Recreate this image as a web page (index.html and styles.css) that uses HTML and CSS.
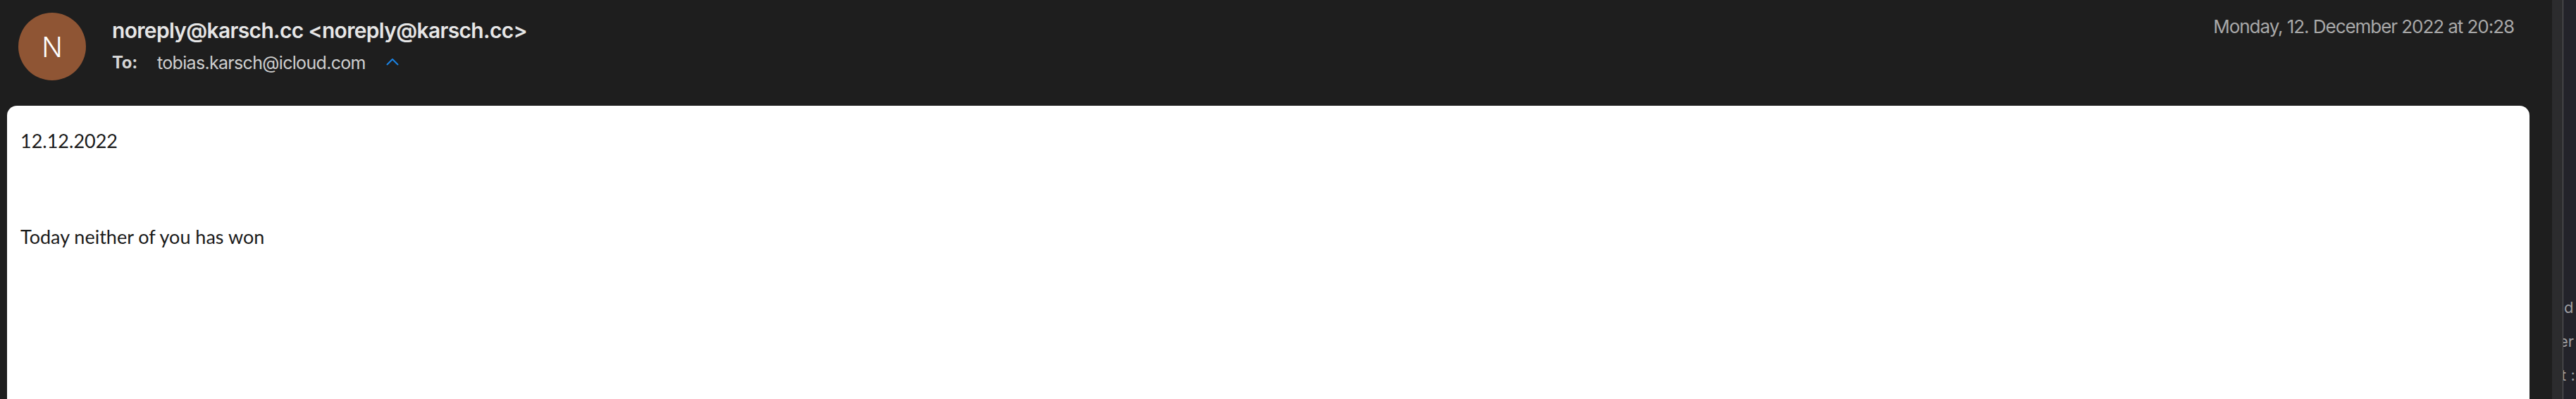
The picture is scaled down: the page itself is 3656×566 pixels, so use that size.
FILE: index.html
```html
<!DOCTYPE html>
<html lang="en">
<head>
<meta charset="utf-8">
<title>noreply@karsch.cc</title>
<link rel="stylesheet" href="styles.css">
</head>
<body>
<div class="window">
  <main class="pane">
    <header class="mail-header">
      <div class="avatar">N</div>
      <div class="meta">
        <div class="from">noreply@karsch.cc &lt;noreply@karsch.cc&gt;</div>
        <div class="to">
          <span class="to-label">To:</span>
          <span class="to-addr">tobias.karsch@icloud.com</span>
          <svg class="chevron" width="18" height="11" viewBox="0 0 18 11" aria-hidden="true">
            <path d="M1.5 9.5 L9 2 L16.5 9.5" fill="none" stroke="#1a84e6" stroke-width="2" stroke-linecap="round" stroke-linejoin="round"/>
          </svg>
        </div>
      </div>
      <div class="date">Monday, 12. December 2022 at 20:28</div>
    </header>
    <article class="card">
      <p class="line">12.12.2022</p>
      <p class="line">&nbsp;</p>
      <p class="line">&nbsp;</p>
      <p class="line">Today neither of you has won</p>
    </article>
  </main>
  <div class="strip"></div>
  <div class="divider"></div>
  <aside class="side">
    <div class="side-lines">
      <div class="side-line first">d</div>
      <div class="side-line second">er</div>
      <div class="side-line third">t :</div>
    </div>
  </aside>
</div>
</body>
</html>
```

FILE: styles.css
```css
html, body {
  margin: 0;
  padding: 0;
  background: #1e1e1e;
  height: 566px;
  overflow: hidden;
}

.window {
  display: flex;
  width: 3656px;
  height: 566px;
  overflow: hidden;
}

.pane {
  width: 3622px;
  flex: 0 0 3622px;
  background: #1e1e1e;
  display: flex;
  flex-direction: column;
}

.mail-header {
  display: flex;
  align-items: flex-start;
  padding: 18px 54px 0 26px;
  height: 132px;
  flex: 0 0 132px;
  box-sizing: border-box;
  font-family: Inter, "Liberation Sans", sans-serif;
}

.avatar {
  width: 96px;
  height: 96px;
  border-radius: 50%;
  background: #8f5534;
  color: #ffffff;
  display: flex;
  align-items: center;
  justify-content: center;
  font-size: 39px;
  font-weight: 300;
  flex: 0 0 96px;
}

.meta {
  margin-left: 37px;
  margin-top: 7px;
  display: flex;
  flex-direction: column;
  flex: 1 1 auto;
}

.from {
  font-size: 30px;
  line-height: 36px;
  font-weight: 600;
  color: #e6e6e6;
  letter-spacing: -0.68px;
}

.to {
  display: flex;
  align-items: center;
  margin-top: 13px;
  height: 30px;
}

.to-label {
  font-size: 24px;
  line-height: 30px;
  font-weight: 700;
  color: #d6d6d6;
  letter-spacing: -0.3px;
}

.to-addr {
  margin-left: 28px;
  font-size: 25px;
  line-height: 30px;
  font-weight: 400;
  color: #cfcfcf;
  letter-spacing: -0.68px;
}

.chevron {
  margin-left: 29px;
  margin-top: -4px;
}

.date {
  margin-top: 4px;
  font-size: 26px;
  line-height: 32px;
  color: #a9a9a9;
  letter-spacing: -1.05px;
  white-space: nowrap;
}

.card {
  margin: 18px 32px 0 10px;
  flex: 1 1 auto;
  background: #ffffff;
  border-radius: 14px 14px 0 0;
  padding: 27px 18px 0 19px;
  font-family: Lato, "Open Sans", sans-serif;
  font-size: 27px;
  color: #1a1a1a;
}

.line {
  margin: 0;
  line-height: 45.33px;
  height: 45.33px;
}

.strip {
  flex: 0 0 15px;
  background: #2c2c2e;
}

.divider {
  flex: 0 0 1px;
  background: #5a5a5c;
}

.side {
  flex: 0 0 18px;
  background: #23232a;
  overflow: hidden;
  font-family: Inter, "Liberation Sans", sans-serif;
  color: #9d9d9f;
  font-size: 22px;
}

.side-lines {
  padding-top: 412px;
  white-space: nowrap;
}

.side-line {
  line-height: 48px;
  height: 48px;
}

.side-line.first {
  margin-left: 1px;
}

.side-line.second {
  margin-left: -6px;
}

.side-line.third {
  margin-left: -3px;
}
```
